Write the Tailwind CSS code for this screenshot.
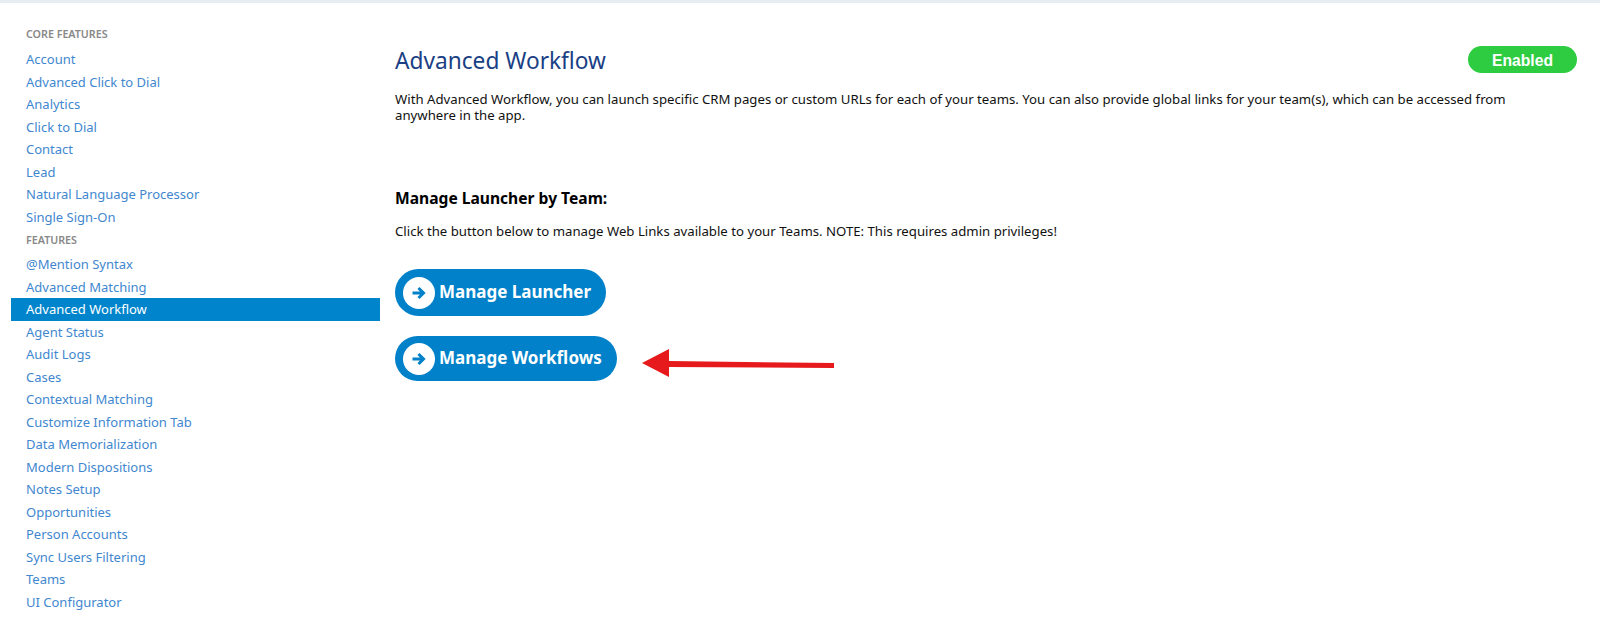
<!DOCTYPE html>
<html lang="en">
<head>
  <meta charset="UTF-8">
  <title>Advanced Workflow</title>
  <script src="https://cdn.jsdelivr.net/npm/@tailwindcss/browser@4"></script>
</head>
<body class="bg-white font-['Noto_Sans',sans-serif] overflow-hidden">
  <div class="h-[3px] bg-[#e8edf2]"></div>
  <div class="flex h-[622px]">
    <!-- Sidebar -->
    <nav class="w-[369px] ml-[11px] shrink-0 pt-[19px] text-[13px] text-[#3f87cf]">
      <div class="h-[26px] pl-[15px] leading-[25px] text-[10.7px] font-semibold text-[#888]">CORE FEATURES</div>
      <a class="block h-[22.5px] pl-[15px] leading-[22px]">Account</a>
      <a class="block h-[22.5px] pl-[15px] leading-[22px]">Advanced Click to Dial</a>
      <a class="block h-[22.5px] pl-[15px] leading-[22px]">Analytics</a>
      <a class="block h-[22.5px] pl-[15px] leading-[22px]">Click to Dial</a>
      <a class="block h-[22.5px] pl-[15px] leading-[22px]">Contact</a>
      <a class="block h-[22.5px] pl-[15px] leading-[22px]">Lead</a>
      <a class="block h-[22.5px] pl-[15px] leading-[22px]">Natural Language Processor</a>
      <a class="block h-[22.5px] pl-[15px] leading-[22px]">Single Sign-On</a>
      <div class="h-[25px] pl-[15px] leading-[25px] text-[10.7px] font-semibold text-[#888]">FEATURES</div>
      <a class="block h-[22.5px] pl-[15px] leading-[22px]">@Mention Syntax</a>
      <a class="block h-[22.5px] pl-[15px] leading-[22px]">Advanced Matching</a>
      <a class="block h-[22.5px] pl-[15px] leading-[22px] bg-[#0085cc] text-white">Advanced Workflow</a>
      <a class="block h-[22.5px] pl-[15px] leading-[22px]">Agent Status</a>
      <a class="block h-[22.5px] pl-[15px] leading-[22px]">Audit Logs</a>
      <a class="block h-[22.5px] pl-[15px] leading-[22px]">Cases</a>
      <a class="block h-[22.5px] pl-[15px] leading-[22px]">Contextual Matching</a>
      <a class="block h-[22.5px] pl-[15px] leading-[22px]">Customize Information Tab</a>
      <a class="block h-[22.5px] pl-[15px] leading-[22px]">Data Memorialization</a>
      <a class="block h-[22.5px] pl-[15px] leading-[22px]">Modern Dispositions</a>
      <a class="block h-[22.5px] pl-[15px] leading-[22px]">Notes Setup</a>
      <a class="block h-[22.5px] pl-[15px] leading-[22px]">Opportunities</a>
      <a class="block h-[22.5px] pl-[15px] leading-[22px]">Person Accounts</a>
      <a class="block h-[22.5px] pl-[15px] leading-[22px]">Sync Users Filtering</a>
      <a class="block h-[22.5px] pl-[15px] leading-[22px]">Teams</a>
      <a class="block h-[22.5px] pl-[15px] leading-[22px]">UI Configurator</a>
    </nav>

    <!-- Main -->
    <main class="flex-1 pl-[15px] pr-[23px] pt-[43px] text-[13.2px] text-[#111]">
      <div class="flex items-center justify-between h-[27px]">
        <h1 class="pt-[2px] text-[22.7px] leading-[27px] text-[#1a3f85]">Advanced Workflow</h1>
        <span class="flex items-center justify-center w-[109px] h-[27px] pt-[3px] rounded-full bg-[#2ecc40] text-white text-[15.7px] font-bold font-['Liberation_Sans',sans-serif]">Enabled</span>
      </div>
      <p class="mt-[18px] pr-[60px] leading-[16px]">With Advanced Workflow, you can launch specific CRM pages or custom URLs for each of your teams. You can also provide global links for your team(s), which can be accessed from anywhere in the app.</p>
      <h2 class="mt-[64px] text-[15.6px] leading-[22px] font-bold text-black">Manage Launcher by Team:</h2>
      <p class="mt-[13px] leading-[18px]">Click the button below to manage Web Links available to your Teams. NOTE: This requires admin privileges!</p>

      <div class="mt-[29px] flex flex-col items-start gap-[20px]">
        <a class="flex items-center h-[47px] w-[211px] rounded-full bg-[#0081c9] pl-2 text-white text-[17px] font-bold">
          <span class="flex items-center justify-center w-[32px] h-[32px] rounded-full bg-white mr-[4px]">
            <svg width="16" height="16" viewBox="0 0 16 16" fill="none" stroke="#0081c9" stroke-width="3"><path d="M1.500 8h10M7.500 3 12.500 8 7.500 13"/></svg>
          </span>
          <span class="pb-[2px]">Manage Launcher</span>
        </a>
        <div class="relative">
          <a class="flex items-center h-[45px] w-[222px] rounded-full bg-[#0081c9] pl-2 text-white text-[17px] font-bold">
            <span class="flex items-center justify-center w-[32px] h-[32px] rounded-full bg-white mr-[4px]">
              <svg width="16" height="16" viewBox="0 0 16 16" fill="none" stroke="#0081c9" stroke-width="3"><path d="M1.500 8h10M7.500 3 12.500 8 7.500 13"/></svg>
            </span>
            <span class="pb-[2px]">Manage Workflows</span>
          </a>
          <!-- red annotation arrow -->
          <svg class="absolute left-[247px] top-[12px]" width="195" height="32" viewBox="0 0 195 32"><path d="M0 15 27 1V13L192 15V20L27 19V29Z" fill="#e6191c"/></svg>
        </div>
      </div>
    </main>
  </div>
</body>
</html>
